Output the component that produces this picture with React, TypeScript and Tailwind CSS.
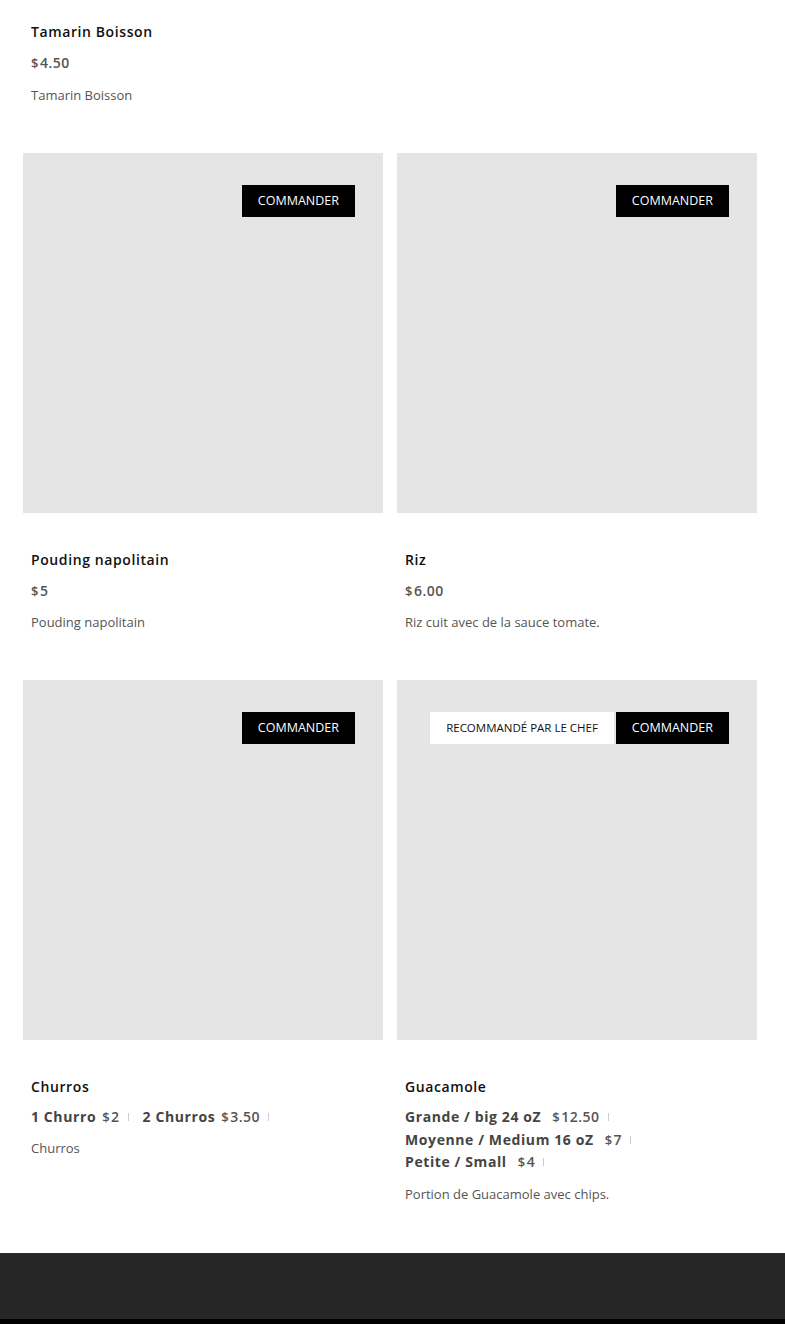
import React from "react";

type Variant = { label: string; price: string };
type Item = {
  title: string;
  price?: string;
  variants?: Variant[];
  variantsInline?: boolean;
  desc: string;
  chef?: boolean;
};

const items: Item[] = [
  { title: "Pouding napolitain", price: "5", desc: "Pouding napolitain" },
  { title: "Riz", price: "6.00", desc: "Riz cuit avec de la sauce tomate." },
  {
    title: "Churros",
    variants: [
      { label: "1 Churro", price: "2" },
      { label: "2 Churros", price: "3.50" },
    ],
    variantsInline: true,
    desc: "Churros",
  },
  {
    title: "Guacamole",
    variants: [
      { label: "Grande / big 24 oZ", price: "12.50" },
      { label: "Moyenne / Medium 16 oZ", price: "7" },
      { label: "Petite / Small", price: "4" },
    ],
    desc: "Portion de Guacamole avec chips.",
    chef: true,
  },
];

function Price({ value }: { value: string }) {
  return (
    <span className="font-semibold text-[#555] text-[14px] tracking-[0.5px]">
      <span className="text-[13px] mr-[1px]">$</span>
      {value}
    </span>
  );
}

function TextBlock({ item, top }: { item: Item; top?: boolean }) {
  return (
    <div className="px-[8px]">
      <h3 className="text-[14px] leading-[20px] font-semibold text-[#111] tracking-[0.6px]">{item.title}</h3>
      {item.price && (
        <div className="mt-[9px] leading-[22px]">
          <Price value={item.price} />
        </div>
      )}
      {item.variants && (
        <div className={item.variantsInline ? "mt-[9px] h-[22px] flex items-center" : "mt-[9px] flex flex-col"}>
          {item.variants.map((v) => (
            <div
              key={v.label}
              className={item.variantsInline ? "h-[22px] leading-[22px] flex items-baseline" : "h-[22.5px] leading-[22.5px] flex items-baseline"}
            >
              <span
                className={
                  item.variantsInline
                    ? "font-bold text-[#444] text-[14px] tracking-[0.6px] mr-[6px]"
                    : "font-bold text-[#444] text-[14px] tracking-[0.6px] mr-[11px]"
                }
              >
                {v.label}
              </span>
              <Price value={v.price} />
              <span className="inline-block self-center w-px h-[8px] bg-[#ccc] ml-[8px] mr-[14px]" />
            </div>
          ))}
        </div>
      )}
      <p className={top ? "mt-[11px] text-[13px] leading-[20px] text-[#555]" : "mt-[10px] text-[13px] leading-[20px] text-[#555]"}>
        {item.desc}
      </p>
    </div>
  );
}

function Card({ item }: { item: Item }) {
  return (
    <div className="pb-[34px]">
      <div className="relative w-[360px] h-[360px] bg-[#e5e5e5]">
        <div className="absolute top-[32px] right-[28px] flex gap-[2px]">
          {item.chef && (
            <span className="h-[32px] px-[16px] bg-white text-[#111] text-[11.5px] flex items-center">
              RECOMMANDÉ PAR LE CHEF
            </span>
          )}
          <span className="h-[32px] px-[16px] bg-black text-white text-[12.5px] flex items-center">
            COMMANDER
          </span>
        </div>
      </div>
      <div className="pt-[37px]">
        <TextBlock item={item} />
      </div>
    </div>
  );
}

export default function App() {
  return (
    <div className="w-[785px] bg-white" style={{ fontFamily: '"Open Sans", "Noto Sans", sans-serif' }}>
      <div className="pl-[23px] pr-[28px]">
        <div className="pt-[22px] pb-[34px]">
          <TextBlock top item={{ title: "Tamarin Boisson", price: "4.50", desc: "Tamarin Boisson" }} />
        </div>
        <div className="grid grid-cols-[360px_360px] gap-x-[14px] gap-y-[14px] pt-[14px] pb-[15px]">
          {items.map((it) => (
            <Card key={it.title} item={it} />
          ))}
        </div>
      </div>
      <div className="h-[66px] bg-[#262626] border-t border-[#2c2c2c]" />
      <div className="h-[10px] bg-black" />
    </div>
  );
}
